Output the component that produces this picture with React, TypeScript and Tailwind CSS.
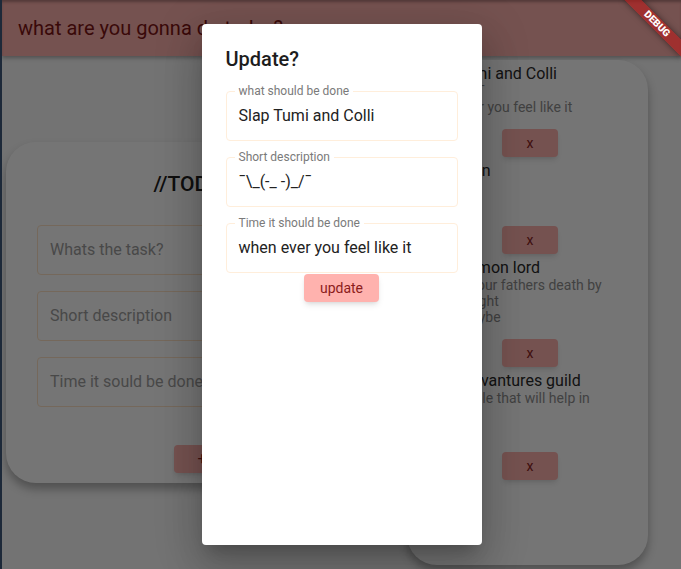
import React from 'react'

const tasks = [
    { title: "Slap Tumi and Colli", desc: "¯\\_(-_ -)_/¯", time: "when ever you feel like it" },
    { title: "Visit Evan", desc: "be nice", time: "later" },
    { title: "Kill a demon lord", desc: "Avenge your fathers death by\nin a fair fight", time: "today maybe" },
    { title: "Go to advantures guild", desc: "Find people that will help in\nbattle", time: "asap" },
]

function HintInput({ hint }: { hint: string }) {
    return (
        <div className="flex h-[50px] items-center rounded-[4px] border border-[#ffe3c7] px-[12px] text-[16px] text-[#9e9e9e]">
            {hint}
        </div>
    )
}

function FilledInput({ label, value }: { label: string, value: string }) {
    return (
        <div className="relative flex h-[50px] items-center rounded-[4px] border border-[#ffeedb] px-[12px] text-[16px] text-[#222222]">
            <span className="absolute -top-[9px] left-[8px] bg-white px-[4px] text-[12px] leading-[16px] text-[#7a7a7a]">{label}</span>
            {value}
        </div>
    )
}

export default function App() {
    return (
        <div className="flex h-[569px] w-[681px] overflow-hidden bg-[#1d2939] font-['Roboto',sans-serif]">
            <div className="w-[2px]" />
            <div className="relative flex flex-1 flex-col overflow-hidden bg-[#fafafa]">
                <header className="flex h-[56px] shrink-0 items-center bg-[#ffb2ae] pl-[16px] text-[20px] text-[#7e1515] shadow-[0_2px_4px_rgba(0,0,0,0.3),inset_0_3px_3px_-1px_rgba(0,0,0,0.3)]">
                    what are you gonna do today?
                </header>

                <main className="flex flex-1 items-center gap-[37px] pl-[4px]">
                    {/* add task card */}
                    <div className="flex h-[341px] w-[364px] flex-col rounded-[30px] bg-white px-[31px] pt-[29px] shadow-[0_6px_10px_rgba(0,0,0,0.3)]">
                        <h1 className="text-center text-[21px] font-medium leading-[26px] text-[#212121]">//TODO</h1>
                        <div className="mt-[28px] flex flex-col gap-[16px]">
                            <HintInput hint="Whats the task?" />
                            <HintInput hint="Short description" />
                            <HintInput hint="Time it sould be done" />
                        </div>
                        <div className="mt-[38px] flex justify-center">
                            <button className="ml-[28px] h-[28px] w-[56px] rounded-[4px] bg-[#ffb2ae] text-[16px] text-[#8a1f1f] shadow-md">+</button>
                        </div>
                    </div>

                    {/* task list card */}
                    <div className="flex h-[505px] w-[241px] flex-col gap-[4px] rounded-[30px] bg-white px-[14px] pt-[4px] shadow-[0_6px_10px_rgba(0,0,0,0.3)]">
                        {tasks.map((t) => (
                            <div key={t.title} className="flex flex-col">
                                <div className="text-[16px] leading-[19px] whitespace-nowrap text-[#2a2a2a]">{t.title}</div>
                                <div className="text-[14px] leading-[16px] whitespace-pre-line text-[#8f8f8f]">{t.desc}</div>
                                <div className="text-[14px] leading-[16px] whitespace-nowrap text-[#8f8f8f]">{t.time}</div>
                                <div className="mt-[14px] flex justify-center">
                                    <button className="ml-[5px] h-[28px] w-[56px] rounded-[4px] bg-[#ffb2ae] text-[14px] text-[#8a1f1f] shadow-md">x</button>
                                </div>
                            </div>
                        ))}
                    </div>
                </main>

                {/* modal barrier + dialog */}
                <div className="absolute inset-0 flex items-center justify-center bg-[rgba(0,0,0,0.54)]">
                    <div className="flex h-[521px] w-[280px] flex-col rounded-[4px] bg-white px-[24px] pt-[23px] shadow-[0_11px_15px_-7px_rgba(0,0,0,0.2),0_24px_38px_3px_rgba(0,0,0,0.14),0_9px_46px_8px_rgba(0,0,0,0.12)]">
                        <h2 className="text-[20px] font-medium leading-[24px] text-[#1d1d1d]">Update?</h2>
                        <div className="mt-[20px] flex flex-col gap-[16px]">
                            <FilledInput label="what should be done" value="Slap Tumi and Colli" />
                            <FilledInput label="Short description" value={"¯\\_(-_ -)_/¯"} />
                            <FilledInput label="Time it should be done" value="when ever you feel like it" />
                        </div>
                        <div className="flex justify-center">
                            <button className="mt-[1px] h-[28px] rounded-[4px] bg-[#ffb2ae] px-[16px] text-[14px] text-[#8c1c1c] shadow-md">update</button>
                        </div>
                    </div>
                </div>

                {/* debug banner */}
                <div className="absolute left-[615px] top-[18px] flex h-[12px] w-[80px] rotate-45 items-center justify-center bg-[rgba(183,28,28,0.63)] text-[10px] font-black leading-[12px] text-white shadow-[0_0_6px_rgba(0,0,0,0.5)]">
                    DEBUG
                </div>
            </div>
        </div>
    )
}
